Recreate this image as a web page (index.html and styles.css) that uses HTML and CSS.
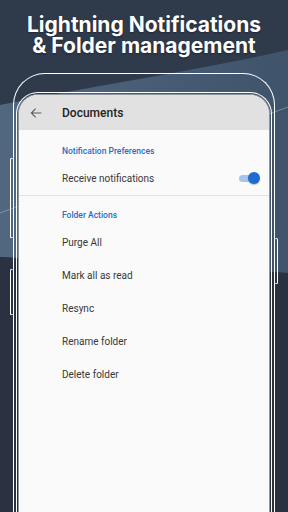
FILE: index.html
```html
<!DOCTYPE html>
<html lang="en">
<head>
    <meta charset="UTF-8">
    <meta name="viewport" content="width=device-width, initial-scale=1.0">
    <title>Documents - Folder settings</title>
    <link rel="stylesheet" href="styles.css">
</head>
<body>
    <h1 class="headline">Lightning Notifications<br>&amp; Folder management</h1>

    <div class="phone">
        <span class="side-key key-left-top"></span>
        <span class="side-key key-left-bottom"></span>
        <span class="side-key key-right"></span>
        <div class="bezel">
            <div class="screen">
                <header class="app-bar">
                    <svg class="back-icon" viewBox="0 0 24 24" width="16" height="16">
                        <path d="M20 12H5.5M11.5 5.5L5 12l6.5 6.5" fill="none" stroke="#5a5a5a" stroke-width="1.6"/>
                    </svg>
                    <span class="app-title">Documents</span>
                </header>

                <section class="pref-group">
                    <h3 class="group-title">Notification Preferences</h3>
                    <div class="pref-row">
                        <span>Receive notifications</span>
                        <span class="switch"><span class="switch-thumb"></span></span>
                    </div>
                </section>

                <section class="pref-group last">
                    <h3 class="group-title second">Folder Actions</h3>
                    <div class="pref-row">Purge All</div>
                    <div class="pref-row">Mark all as read</div>
                    <div class="pref-row">Resync</div>
                    <div class="pref-row">Rename folder</div>
                    <div class="pref-row">Delete folder</div>
                </section>
            </div>
        </div>
    </div>
</body>
</html>
```

FILE: styles.css
```css
html, body {
    height: 512px;
}
body {
    margin: 0;
    overflow: hidden;
    font-family: 'Roboto', 'Liberation Sans', sans-serif;
    background: #2f3a4b url("data:image/svg+xml,<svg xmlns='http://www.w3.org/2000/svg' width='288' height='512'><defs><linearGradient id='b' x1='0' y1='0' x2='1' y2='0'><stop offset='0' stop-color='%23516780'/><stop offset='1' stop-color='%233f546b'/></linearGradient></defs><path d='M0 105C90 86 190 72 288 50V273L0 257Z' fill='url(%23b)'/><path d='M0 257L288 273V512H0Z' fill='%232a3140'/><path d='M0 213L288 107' stroke='%2396b6d2' stroke-width='.8' opacity='.7'/></svg>") no-repeat;
}
.headline {
    margin: 0;
    padding-top: 14px;
    font-family: 'Inter', 'Open Sans', sans-serif;
    font-size: 21px;
    line-height: 21px;
    font-weight: 700;
    color: #fff;
    text-align: center;
    text-shadow: 0 1px 2px rgba(0, 0, 0, 0.35);
}
.phone {
    position: relative;
    margin: 17px 13px 0;
    padding: 18px 2px 0;
    border: 1px solid #fff;
    border-bottom: none;
    border-radius: 32px 32px 0 0;
}
.side-key {
    position: absolute;
    width: 2px;
    border: 1px solid #fff;
    border-radius: 2px;
}
.key-left-top {
    left: -4px;
    top: 84px;
    height: 78px;
    border-right: none;
}
.key-left-bottom {
    left: -4px;
    top: 195px;
    height: 44px;
    border-right: none;
}
.key-right {
    right: -4px;
    top: 164px;
    height: 44px;
    border-left: none;
}
.bezel {
    padding: 1px;
    border: 1px solid #fff;
    border-bottom: none;
    border-radius: 22px 22px 0 0;
}
.screen {
    min-height: 440px;
    background-color: #fafafa;
    border: 1px solid #8d97a2;
    border-bottom: none;
    border-radius: 20px 20px 0 0;
    overflow: hidden;
}
.app-bar {
    display: flex;
    align-items: center;
    height: 35px;
    padding-left: 9px;
    background-color: #e1e1e1;
}
.back-icon {
    display: block;
    margin-right: 18px;
}
.app-title {
    font-size: 12px;
    font-weight: 500;
    color: #222;
}
.pref-group {
    border-bottom: 1px solid #e2e2e2;
}
.pref-group.last {
    border-bottom: none;
}
.group-title {
    margin: 0;
    padding: 15px 0 5px 43px;
    font-size: 8.5px;
    line-height: 12px;
    font-weight: 500;
    color: #2b6cc4;
}
.group-title.second {
    padding-top: 13px;
}
.pref-row {
    display: flex;
    align-items: center;
    justify-content: space-between;
    height: 33px;
    padding: 0 10px 0 43px;
    font-size: 10px;
    color: #383838;
}
.switch {
    position: relative;
    width: 18px;
    height: 7px;
    margin-right: 2px;
    border-radius: 4px;
    background-color: #a8c4ea;
}
.switch-thumb {
    position: absolute;
    right: -3px;
    top: -3px;
    width: 12px;
    height: 12px;
    border-radius: 50%;
    background-color: #1f6bd0;
    box-shadow: 0 1px 1px rgba(0, 0, 0, 0.25);
}
```
